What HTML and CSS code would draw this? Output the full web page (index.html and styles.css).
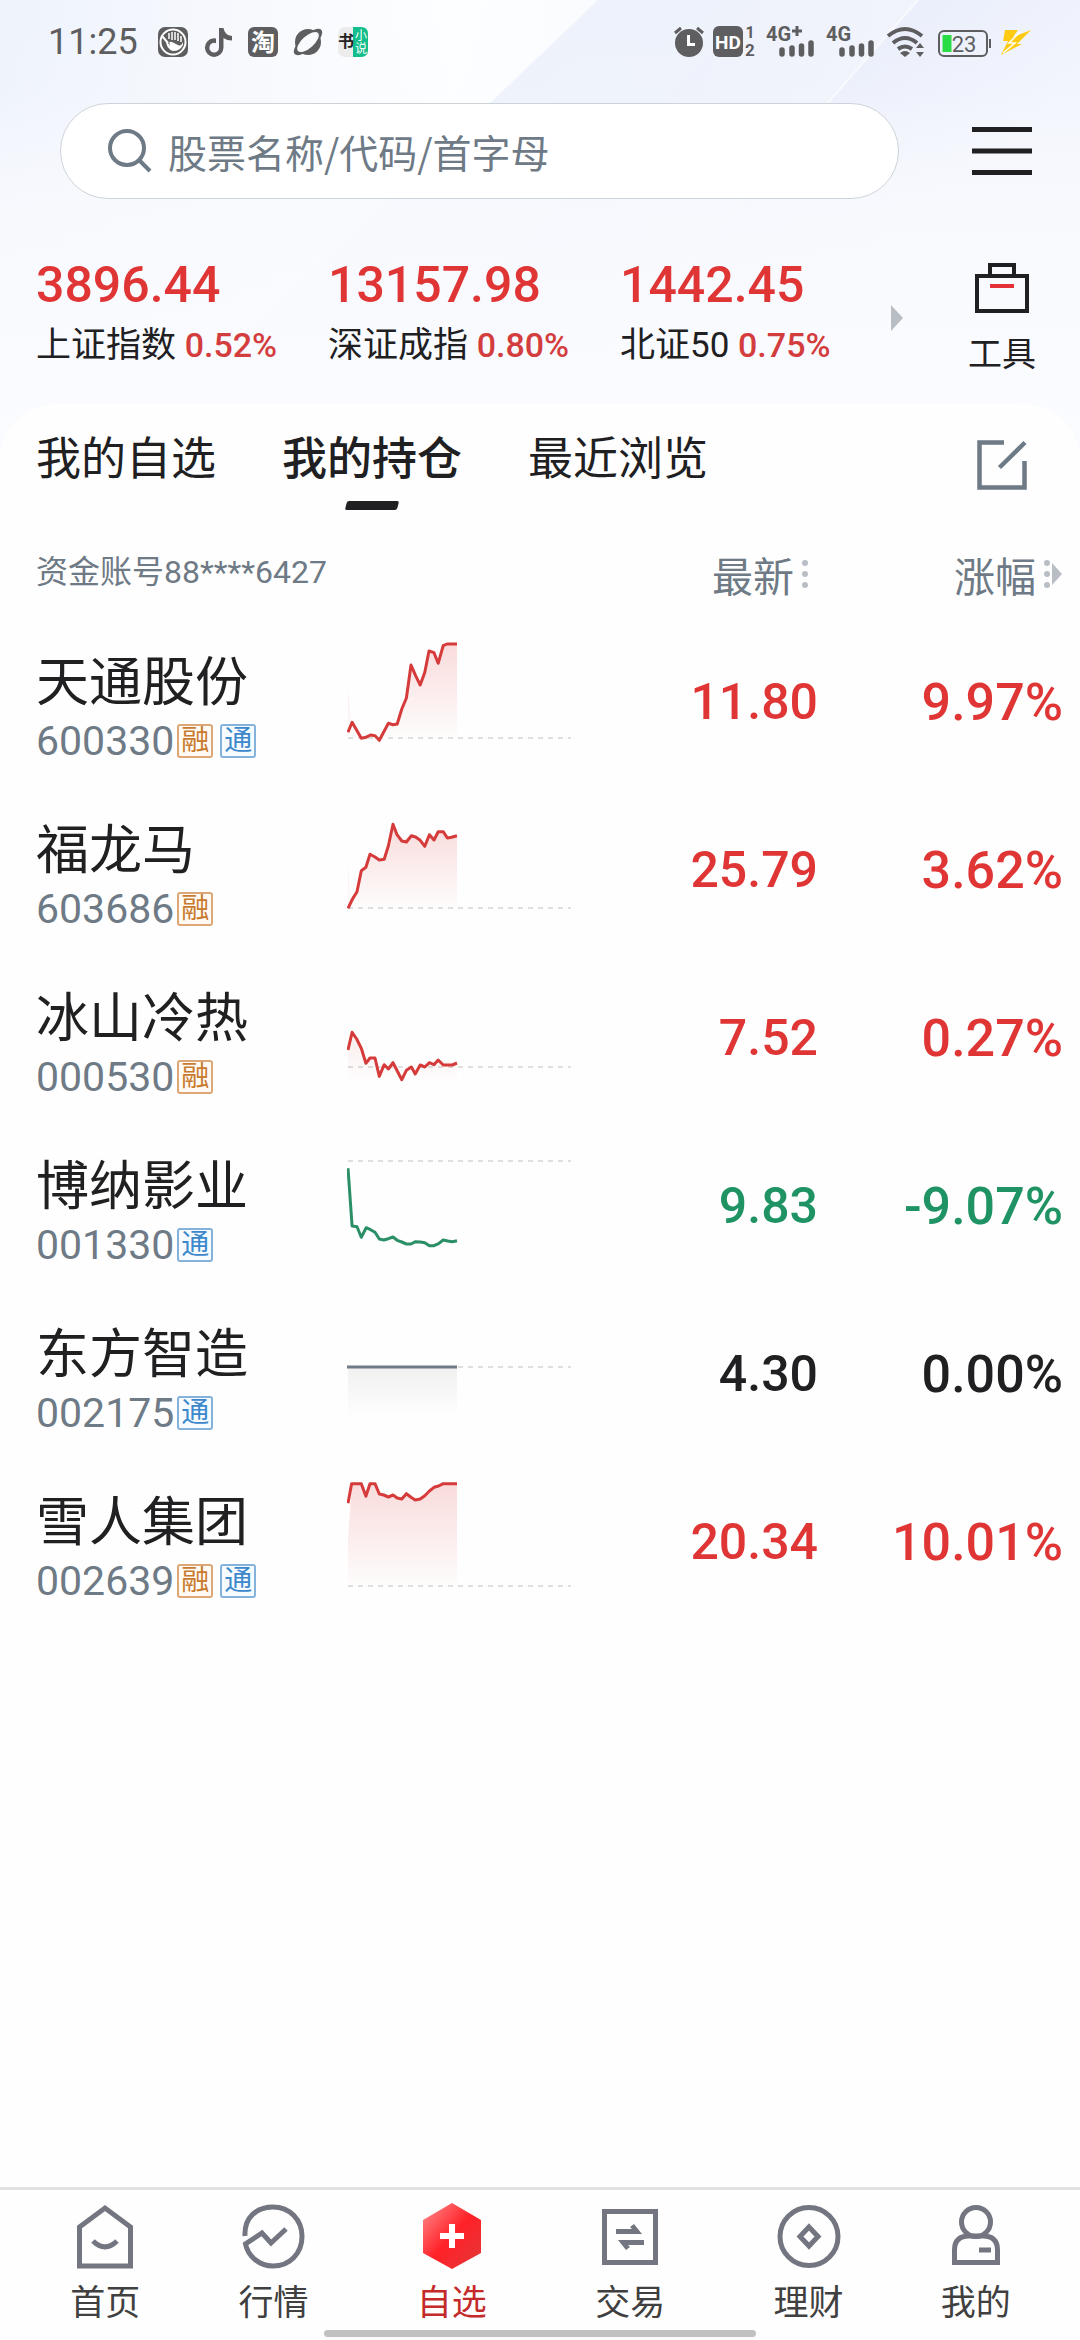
FILE: index.html
```html
<!DOCTYPE html>
<html lang="zh-CN">
<head>
<meta charset="utf-8">
<meta name="viewport" content="width=device-width, initial-scale=1">
<title>自选</title>
<link rel="stylesheet" href="styles.css">
</head>
<body>
<svg class="defs" width="0" height="0" aria-hidden="true">
  <defs>
    <linearGradient id="fillUp" x1="0" y1="0" x2="0" y2="1"><stop offset="0" stop-color="#e03535" stop-opacity=".17"/><stop offset="1" stop-color="#e03535" stop-opacity=".01"/></linearGradient>
    <linearGradient id="fillFlat" x1="0" y1="0" x2="0" y2="1"><stop offset="0" stop-color="#202020" stop-opacity=".06"/><stop offset="1" stop-color="#202020" stop-opacity="0"/></linearGradient>
  </defs>
</svg>
<header class="top">
  <svg class="top-art" viewBox="0 0 1080 460" preserveAspectRatio="none" aria-hidden="true">
    <defs>
      <linearGradient id="base" x1="0" y1="0" x2="1" y2="0"><stop offset="0" stop-color="#eef3fc"/><stop offset=".2" stop-color="#f6f8fd"/><stop offset=".42" stop-color="#fdfeff"/><stop offset="1" stop-color="#f1f4fc"/></linearGradient>
      <linearGradient id="bandA" x1="0" y1="0" x2="1" y2="1"><stop offset="0" stop-color="#ebf1fb"/><stop offset="1" stop-color="#f1f4fc"/></linearGradient>
      <linearGradient id="bandB" x1="0" y1="0" x2="1" y2="0"><stop offset="0" stop-color="#e9edfa"/><stop offset="1" stop-color="#f2f4fc"/></linearGradient>
      <linearGradient id="bandC" x1="0" y1="0" x2="1" y2="1"><stop offset="0" stop-color="#dfe5f8"/><stop offset=".6" stop-color="#f2f5fd"/></linearGradient>
      <linearGradient id="fade" x1="0" y1="0" x2="0" y2="1"><stop offset="0" stop-color="#f9fafe" stop-opacity="0"/><stop offset=".2" stop-color="#f9fafe" stop-opacity=".1"/><stop offset=".45" stop-color="#f9fafe" stop-opacity=".85"/><stop offset="1" stop-color="#fbfcff"/></linearGradient>
    </defs>
    <rect width="1080" height="460" fill="url(#base)"/>
    <path d="M598 0H770L370 460H116Z" fill="url(#bandA)"/>
    <path d="M760 0H918L515 460H313Z" fill="url(#bandB)"/>
    <path d="M918 0H1080V460H515Z" fill="url(#bandC)"/>
    <path d="M918 0L515 460" stroke="#fff" stroke-opacity=".6" stroke-width="2"/>
    <rect width="1080" height="460" fill="url(#fade)"/>
  </svg>

  <div class="status">
    <div class="status-left">
      <time class="clock">11:25</time>
      <svg width="30" height="30" viewBox="0 0 30 30"><rect width="30" height="30" rx="7" fill="#5e5e60"/><circle cx="15" cy="15" r="12.500" fill="none" stroke="#fff" stroke-width="2"/><path d="M4 9L10 16" stroke="#fff" stroke-width="2"/><path d="M11 6V12M14 5V13M17 5V13M20 6V14M23 9V15" stroke="#fff" stroke-width="1.500" fill="none"/><path d="M8 13L12 19Q10 14 14 15L20 18Q23 20 25 15V18Q22 24 15 24Q8 22 8 13Z" fill="#fff"/></svg>
      <svg width="30" height="30" viewBox="0 0 30 30"><path d="M16 1H20.500Q21.500 8 29 9V13.500Q24 13.500 20.500 11V20.500A9.300 9.300 0 1 1 11 11.300L13 11.500V16.200A4.800 4.800 0 1 0 16 20.500Z" fill="#5e5e60"/></svg>
      <svg width="30" height="30" viewBox="0 0 30 30"><rect width="30" height="30" rx="6" fill="#5e5e60"/><text class="glyph-cn" x="15" y="24" font-size="24" text-anchor="middle" fill="#fff">淘</text></svg>
      <svg width="30" height="30" viewBox="0 0 30 30"><circle cx="15" cy="15" r="13" fill="#5e5e60"/><ellipse cx="15" cy="15" rx="18" ry="7" transform="rotate(-42 15 15)" fill="#5e5e60"/><ellipse cx="15" cy="15" rx="13.500" ry="6" transform="rotate(-42 15 15)" fill="#f8fafd"/></svg>
      <svg width="30" height="30" viewBox="0 0 30 30"><rect width="30" height="30" rx="7" fill="#ececec"/><path d="M15 0H23Q30 0 30 7V23Q30 30 23 30H15Z" fill="#14bd8c"/><text class="glyph-cn" x="8" y="20" font-size="16" text-anchor="middle" fill="#222">书</text><text class="glyph-cn-thin" x="23" y="13" font-size="12" text-anchor="middle" fill="#fff">小</text><text class="glyph-cn-thin" x="23" y="26" font-size="12" text-anchor="middle" fill="#fff">说</text></svg>
    </div>
    <svg class="status-right" width="360" height="32" viewBox="0 0 360 32" fill="#5e5e60">
      <circle cx="15" cy="17" r="14"/><path d="M1 7L7 2M23 2L29 7" stroke="#5e5e60" stroke-width="3"/><path d="M14.500 9V18.500H21" stroke="#fff" stroke-width="3" fill="none"/>
      <rect x="39" y="0" width="30" height="31" rx="6"/><text class="glyph-lat" x="54" y="23" font-size="19" text-anchor="middle" fill="#fff">HD</text>
      <text class="glyph-lat" x="76" y="12" font-size="16" text-anchor="middle">1</text><text class="glyph-lat" x="76" y="30" font-size="17" text-anchor="middle">2</text>
      <text class="glyph-lat" x="92" y="15" font-size="20">4G</text><path d="M118 5H128M123 0V10" stroke="#5e5e60" stroke-width="3"/>
      <path d="M108 24V28M118 22V28M127.500 20V28M137 17V28M168 24V28M178 22V28M187.500 20V28M197 17V28" stroke="#5e5e60" stroke-width="5.500" stroke-linecap="round"/>
      <text class="glyph-lat" x="152" y="15" font-size="20">4G</text>
      <path d="M214 10Q231 -4 248 10M219 17Q231 7 243 17M224 23Q231 18 238 23" fill="none" stroke="#5e5e60" stroke-width="4"/><path d="M226 27Q231 23 236 27L231 31Z"/><path d="M246 17L250 22H242ZM246 31L250 26H242Z"/>
      <rect x="265" y="5" width="48" height="25" rx="5" fill="none" stroke="#5e5e60" stroke-width="2"/><path d="M316 13V22" stroke="#5e5e60" stroke-width="2"/><rect x="268.500" y="9" width="9" height="17" fill="#27dc45"/><text class="glyph-num" x="290" y="26" font-size="22" text-anchor="middle">23</text>
      <path d="M331 4H344L339 11L357 4L343 18H348L327 29L334 15H329Z" fill="#ffcb12"/><path d="M346 6L335 17H341L329 27" fill="none" stroke="#fff" stroke-width="1.500"/>
    </svg>
  </div>

  <div class="search-row">
    <form class="search" role="search">
      <svg width="44" height="44" viewBox="0 0 44 44" fill="none" stroke="#6e7a85" stroke-width="4"><circle cx="19" cy="19" r="17"/><path d="M31 31L42 42"/></svg>
      <input type="search" class="search-input" aria-label="搜索股票" placeholder="股票名称/代码/首字母">
    </form>
    <button class="icon-btn" type="button" aria-label="菜单"><svg width="60" height="50" viewBox="0 0 60 50" stroke="#202022" stroke-width="5"><path d="M0 3.500H60M0 25H60M0 46.500H60"/></svg></button>
  </div>

  <div class="market">
    <ul class="indices">
      <li><strong class="index-value">3896.44</strong><span class="index-label">上证指数 <b>0.52%</b></span></li>
      <li><strong class="index-value">13157.98</strong><span class="index-label">深证成指 <b>0.80%</b></span></li>
      <li><strong class="index-value">1442.45</strong><span class="index-label">北证50 <b>0.75%</b></span></li>
    </ul>
    <svg class="more" width="12" height="26" viewBox="0 0 12 26"><path d="M0 0L12 13L0 26Z" fill="#b9bec5"/></svg>
    <button class="tools" type="button"><svg width="54" height="50" viewBox="0 0 54 50" fill="none" stroke="#202022" stroke-width="4"><path d="M2 13H52V48H2ZM15 13V2H39V13"/><path d="M15 23H39" stroke="#e43137"/></svg>工具</button>
  </div>
</header>

<main class="sheet">
  <div class="tabs" role="tablist">
    <button class="tab" type="button" role="tab" aria-selected="false">我的自选</button>
    <button class="tab" type="button" role="tab" aria-selected="true">我的持仓</button>
    <button class="tab" type="button" role="tab" aria-selected="false">最近浏览</button>
    <button class="icon-btn edit" type="button" aria-label="编辑"><svg width="50" height="50" viewBox="0 0 50 50" fill="none" stroke="#6e7a85" stroke-width="4.500"><path d="M27 2.500H2.500V47.500H47.500V21M22.500 27.500L48 2.500"/></svg></button>
  </div>

  <table class="stocks">
    <colgroup><col class="c-name"><col class="c-chart"><col><col class="c-change"></colgroup>
    <thead>
      <tr>
        <th class="account" colspan="2" scope="col">资金账号88****6427</th>
        <th scope="col"><span class="sort">最新<svg width="6" height="28" viewBox="0 0 6 28" fill="#b9bec5"><circle cx="3" cy="3" r="3"/><circle cx="3" cy="14" r="3"/><circle cx="3" cy="25" r="3"/></svg></span></th>
        <th scope="col"><span class="sort">涨幅<svg width="18" height="28" viewBox="0 0 18 28" fill="#b9bec5"><circle cx="3" cy="3" r="3"/><circle cx="3" cy="14" r="3"/><circle cx="3" cy="25" r="3"/><path d="M8 3L18 14L8 25Z"/></svg></span></th>
      </tr>
    </thead>
    <tbody>
      <tr class="up">
        <td class="name"><span class="title">天通股份</span><span class="code">600330<i class="tag rong">融</i><i class="tag tong">通</i></span></td>
        <td><svg class="spark" viewBox="0 0 224 168"><path class="ref" d="M1 120H224"/><path fill="url(#fillUp)" d="M1 72L4 102 14.300 120.300 23.500 117 32.300 120 41.400 105.300 50.200 106 59.400 80 64 47 73.200 67 77.800 54.300 82 33 87 34.700 91.200 45.300 96.200 27.700 100 26H110V120H1Z"/><polyline points="1,114.300 5.100,104.300 14.300,120.300 18.900,119.300 23.500,117 28,117.700 32.300,122.300 41.400,105.300 46,106.700 50.200,106 54.800,91 59.400,80 64,47 68.600,57.700 73.200,67 77.800,54.300 82,33 87,34.700 91.200,45.300 96.200,27.700 100,26 110,26"/></svg></td>
        <td class="num">11.80</td><td class="num">9.97%</td>
      </tr>
      <tr class="up">
        <td class="name"><span class="title">福龙马</span><span class="code">603686<i class="tag rong">融</i></span></td>
        <td><svg class="spark" viewBox="0 0 224 168"><path class="ref" d="M1 122H224"/><path fill="url(#fillUp)" d="M1 80L3 112 10 105.700 14.300 84.700 18.900 81.300 23 68.300 32.300 74 37.200 73.300 41.400 59.700 46 38.300 50 48.700 54.800 55 64.400 49.700 73.200 54.300 77.800 60.300 82.400 48.700 87 54 91.200 45.700 96.200 45.700 100.400 52 110 49.700V122H1Z"/><polyline points="1,122.300 5.500,113 10,105.700 14.300,84.700 18.900,81.300 23,68.300 28,71 32.300,74 37.200,73.300 41.400,59.700 46,38.300 50,48.700 54.800,55 59.400,56 64.400,49.700 68.600,51 73.200,54.300 77.800,60.300 82.400,48.700 87,54 91.200,45.700 96.200,45.700 100.400,52 104.600,51.300 110,49.700"/></svg></td>
        <td class="num">25.79</td><td class="num">3.62%</td>
      </tr>
      <tr class="up">
        <td class="name"><span class="title">冰山冷热</span><span class="code">000530<i class="tag rong">融</i></span></td>
        <td><svg class="spark" viewBox="0 0 224 168"><path class="ref" d="M1 113H224"/><path fill="url(#fillUp)" fill-opacity=".5" d="M1 96L5 78.300 9.700 85 14.300 94.300 18.900 109.300 28 104 32.300 122 46 108.700 55 125 68 120 91.200 106 110 109V127H1Z"/><polyline points="1,96 5.100,78.300 9.700,85 14.300,94.300 18.900,109.300 23,104 28,104 32.300,122.300 37.200,110.700 41.400,115 46,108.700 54.800,125.700 59.400,116.300 64.400,113 68.200,120 73.200,111 77.800,113 82.400,108.700 87,110.700 91.200,106 96.200,111 105.400,111 110,109"/></svg></td>
        <td class="num">7.52</td><td class="num">0.27%</td>
      </tr>
      <tr class="down">
        <td class="name"><span class="title">博纳影业</span><span class="code">001330<i class="tag tong">通</i></span></td>
        <td><svg class="spark" viewBox="0 0 224 168"><path class="ref" d="M1 39H224"/><polyline points="1,46.300 5.100,104 10,104.700 14.300,115.300 19.200,105.700 23.500,107.700 28,110.300 32.300,117 36.800,118 41.400,116.700 46,115 50.200,118.300 54.800,120 59.400,122 64,122 68.600,119.700 73.200,120 77.800,120.700 82.400,123.700 87,123.700 91.600,121.700 96.200,118 100.800,119 105.400,119.700 110,118.700"/></svg></td>
        <td class="num">9.83</td><td class="num">-9.07%</td>
      </tr>
      <tr class="flat">
        <td class="name"><span class="title">东方智造</span><span class="code">002175<i class="tag tong">通</i></span></td>
        <td><svg class="spark" viewBox="0 0 224 168"><path class="ref" d="M1 77H224"/><path fill="url(#fillFlat)" d="M1 77H110V127H1Z"/><polyline points="0,77 110,77"/></svg></td>
        <td class="num">4.30</td><td class="num">0.00%</td>
      </tr>
      <tr class="up">
        <td class="name"><span class="title">雪人集团</span><span class="code">002639<i class="tag rong">融</i><i class="tag tong">通</i></span></td>
        <td><svg class="spark" viewBox="0 0 224 168"><path class="ref" d="M1 128H224"/><path fill="url(#fillUp)" d="M1 80L4 40 5 25.700H14.300L18.900 38.300 23 25.700H28L32.300 36 41.400 39 46 37 54.800 41 59.400 35.700 68.200 42 77.800 37.700 87 29.300 96.200 25.700H110V128H1Z"/><polyline points="1,45.300 4.600,25.700 14.300,25.700 18.900,38.300 23,25.700 28,25.700 32.300,36 36.800,37 41.400,39 46,37 50.200,40 54.800,41 59.400,35.700 64,39.300 68.200,42 73.200,41 77.800,37.700 82.400,33 87,29.300 91.600,28 96.200,25.700 110,25.700"/></svg></td>
        <td class="num">20.34</td><td class="num">10.01%</td>
      </tr>
    </tbody>
  </table>
</main>

<nav class="nav">
  <a class="nav-item" href="#home"><svg width="68" height="68" viewBox="0 0 68 68"><path d="M8.500 25V64H59.500V25L34 6ZM22 39Q34 51 46 39"/></svg>首页</a>
  <a class="nav-item" href="#quotes"><svg width="68" height="68" viewBox="0 0 68 68"><path d="M6 34C5 15 18 5 34 5C51 5 63 18 63 34.500S51 64 34 64C20 64 9 54 6.500 42L23 31L32 41L47 27"/></svg>行情</a>
  <a class="nav-item active" href="#watchlist" aria-current="page"><svg width="68" height="68" viewBox="0 0 68 68"><defs><linearGradient id="hex" x1="0" y1="0" x2="1" y2="1"><stop offset="0" stop-color="#ff8f90"/><stop offset=".5" stop-color="#ff2128"/><stop offset="1" stop-color="#e23838"/></linearGradient></defs><path d="M34 1L63 18V51L34 67L5 51V18Z" fill="url(#hex)" stroke="none"/><path d="M34 22V46M22 34H46" stroke="#fff" stroke-width="6"/></svg>自选</a>
  <a class="nav-item" href="#trade"><svg width="68" height="68" viewBox="0 0 68 68"><path d="M8.500 9.500H59.500V60.500H8.500Z"/><path class="solid" d="M20 27H36L34 25L38 22L46 32H20ZM48 43H32L34 45L30 48L22 38H48Z"/></svg>交易</a>
  <a class="nav-item" href="#wealth"><svg width="68" height="68" viewBox="0 0 68 68"><circle cx="34" cy="34.500" r="29"/><path d="M34 25L43 34.500L34 44L25 34.500Z"/></svg>理财</a>
  <a class="nav-item" href="#me"><svg width="68" height="68" viewBox="0 0 68 68"><circle cx="34" cy="20" r="14.500"/><path d="M12.500 60.500V48Q12.500 34 27 34H41Q55.500 34 55.500 48V60.500ZM37 48H49"/></svg>我的</a>
</nav>
<div class="gesture"></div>
</body>
</html>
```
FILE: styles.css
```css
* { box-sizing: border-box; }

:root {
  --ink: #202022;
  --muted: #6e7a85;
  --up: #e03535;
  --down: #1f9363;
}

body {
  margin: 0;
  min-height: 100vh;
  display: flex;
  flex-direction: column;
  position: relative;
  background: #fbfcff;
  color: var(--ink);
  font-family: Roboto, "Noto Sans CJK SC", sans-serif;
}

button, input {
  font: inherit;
  color: inherit;
  border: 0;
  padding: 0;
  margin: 0;
  background: none;
}

svg { display: block; flex: none; }

.defs { position: absolute; }

.top { position: relative; }

.top-art {
  position: absolute;
  top: 0;
  left: 0;
  width: 100%;
  height: 460px;
  z-index: -1;
}

/* Status bar */
.status {
  display: flex;
  align-items: center;
  justify-content: space-between;
  height: 84px;
  padding: 0 46px 0 48px;
}

.status svg { overflow: visible; }

.status-left { display: flex; align-items: center; gap: 15px; }

.clock {
  min-width: 95px;
  font-size: 36px;
  color: #5e5e60;
}

.glyph-cn { font-family: "Noto Sans CJK SC", sans-serif; font-weight: 700; }
.glyph-cn-thin { font-family: "Noto Sans CJK SC", sans-serif; }
.glyph-lat { font-family: Roboto, sans-serif; font-weight: 700; }
.glyph-num { font-family: Roboto, sans-serif; }

/* Search */
.search-row {
  display: flex;
  align-items: center;
  gap: 73px;
  margin-top: 19px;
  padding: 0 48px 0 60px;
}

.search {
  flex: 1;
  display: flex;
  align-items: center;
  gap: 16px;
  height: 96px;
  padding: 0 48px 0 47px;
  background: #fff;
  border: 1px solid #ccd3d9;
  border-radius: 48px;
}

.search-input {
  flex: 1;
  min-width: 0;
  font-family: "Noto Sans CJK SC", sans-serif;
  font-size: 39px;
  outline: 0;
}

.search-input::placeholder { color: var(--muted); opacity: 1; }

/* Market indices */
.market {
  display: flex;
  align-items: flex-start;
  padding: 56px 44px 25px 36px;
}

.indices {
  flex: 1;
  display: grid;
  grid-template-columns: 292fr 292fr 271fr;
  margin: 0;
  padding: 0;
  list-style: none;
}

.index-value, .index-label {
  display: block;
  line-height: 60px;
  white-space: nowrap;
}

.index-value { font-size: 50px; font-weight: 500; color: var(--up); }
.index-label { font-size: 35px; }
.index-label b { font-size: 34px; font-weight: 500; color: #d43d3d; }

.more { margin: 50px 65px 0 0; }

.tools {
  display: flex;
  flex-direction: column;
  align-items: center;
  gap: 16px;
  width: 68px;
  padding-top: 8px;
  font-size: 34px;
  line-height: 50px;
}

/* Sheet */
.sheet {
  flex: 1;
  background: #fefefe;
  border-radius: 56px 56px 0 0;
}

.tabs {
  display: flex;
  align-items: flex-start;
  gap: 66px;
  padding: 26px 53px 20px 36px;
}

.tab {
  display: flex;
  flex-direction: column;
  align-items: center;
  gap: 11px;
  font-size: 45px;
  line-height: 60px;
}

.tab::after {
  content: "";
  width: 52px;
  height: 9px;
  border-radius: 2px;
  transform: skewX(-15deg);
}

.tab[aria-selected="true"] { font-weight: 500; }
.tab[aria-selected="true"]::after { background: var(--ink); }

.edit { margin: 10px 0 0 auto; }

/* Stock list */
.stocks {
  width: 100%;
  table-layout: fixed;
  border-collapse: collapse;
}

.c-name { width: 347px; }
.c-chart { width: 224px; }
.c-change { width: 262px; }

th, td { padding: 0; text-align: right; font-weight: 400; }

th { height: 88px; color: var(--muted); font-size: 41px; }
th:last-child { padding-right: 18px; }
th:nth-child(2) { padding-right: 10px; }

.stocks .account {
  padding: 0 0 10px 36px;
  text-align: left;
  font-size: 32px;
}

.sort { display: inline-flex; align-items: center; gap: 8px; }

tbody tr { height: 168px; }

.stocks .name { padding: 15px 0 0 36px; text-align: left; }

.title { display: block; font-size: 53px; line-height: 60px; }

.code {
  display: flex;
  align-items: center;
  margin-top: 3px;
  color: var(--muted);
  font-size: 41px;
  line-height: 50px;
}

.tag {
  width: 36px;
  height: 34px;
  margin-left: 3px;
  border: 2px solid;
  border-radius: 3px;
  font-size: 28px;
  font-style: normal;
  line-height: 30px;
  text-align: center;
}

.tag + .tag { margin-left: 7px; }
.rong { color: #c87a2e; border-color: #dca878; background: #fffaf3; }
.tong { color: #3c88cb; border-color: #84b2da; background: #f6fbff; }

.spark { width: 224px; height: 168px; }
.spark polyline { fill: none; stroke: #d63b3b; stroke-width: 3; stroke-linejoin: round; }
.spark .ref { stroke: #dfdfdf; stroke-width: 2; stroke-dasharray: 5; }
.down .spark polyline { stroke: #2b8f66; }
.flat .spark polyline { stroke: var(--muted); }

.num { font-size: 50px; font-weight: 500; }
.num:nth-child(4) { padding-right: 17px; font-size: 52px; }
.up .num { color: var(--up); }
.down .num { color: var(--down); }

/* Bottom navigation */
.nav {
  display: grid;
  grid-template-columns: 158fr 178fr 178fr 178fr 178fr 156fr;
  padding: 12px 26px 11px;
  background: #fefefe;
  border-top: 3px solid #e2e2e2;
}

.nav-item {
  display: flex;
  flex-direction: column;
  align-items: center;
  gap: 9px;
  color: #404040;
  font-size: 35px;
  line-height: 50px;
  text-decoration: none;
}

.nav-item svg { fill: none; stroke: #737681; stroke-width: 5; }
.nav-item .solid { fill: #737681; stroke: none; }
.nav-item.active { color: #c42a2a; }

.gesture {
  position: absolute;
  bottom: 3px;
  left: 30%;
  width: 40%;
  height: 7px;
  border-radius: 4px;
  background: #c1c1c1;
}
```
